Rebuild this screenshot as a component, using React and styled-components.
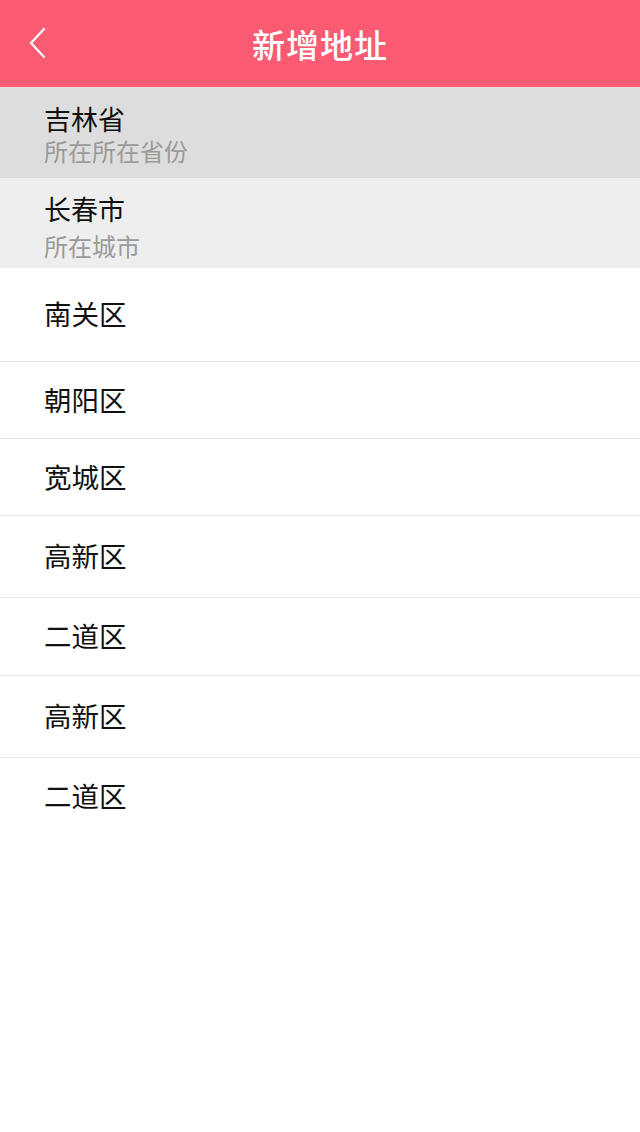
import React from "react";
import styled, { createGlobalStyle } from "styled-components";

const districts = [
    { name: "南关区", height: 93 },
    { name: "朝阳区", height: 77 },
    { name: "宽城区", height: 77 },
    { name: "高新区", height: 82 },
    { name: "二道区", height: 78 },
    { name: "高新区", height: 82 },
    { name: "二道区", height: 78 },
];

function App() {
    return (
        <>
            <GlobalStyle />
            <Page>
                <Header>
                    <BackButton aria-label="返回">
                        <svg width="20" height="32" viewBox="0 0 20 32">
                            <polyline
                                points="16,2 3,16 16,30"
                                fill="none"
                                stroke="#ffffff"
                                strokeWidth="2.2"
                                strokeLinecap="round"
                                strokeLinejoin="miter"
                            />
                        </svg>
                    </BackButton>
                    <Title>新增地址</Title>
                </Header>

                <Selected $bg="#dddddd">
                    <MainText>吉林省</MainText>
                    <SubText $gap={5}>所在所在省份</SubText>
                </Selected>
                <Selected $bg="#eeeeee">
                    <MainText>长春市</MainText>
                    <SubText $gap={10}>所在城市</SubText>
                </Selected>

                <List>
                    {districts.map((item, index) => (
                        <Item key={index} $height={item.height} $first={index === 0}>
                            {item.name}
                        </Item>
                    ))}
                </List>
            </Page>
        </>
    );
}

export default App;

const GlobalStyle = createGlobalStyle`
    html, body {
        margin: 0;
        padding: 0;
        background: #ffffff;
    }
    body {
        font-family: "Noto Sans CJK SC", "Noto Sans", sans-serif;
    }
`;

const Page = styled.div`
    width: 640px;
    min-height: 1132px;
    background: #ffffff;
    display: flex;
    flex-direction: column;
`;

const Header = styled.div`
    position: relative;
    height: 87px;
    background: #fb5b72;
    border-bottom: 1px solid #e9dcdd;
    display: flex;
    align-items: center;
    justify-content: center;
`;

const BackButton = styled.div`
    position: absolute;
    left: 28px;
    top: 27px;
    width: 20px;
    height: 32px;
    display: flex;
`;

const Title = styled.h1`
    margin: 0;
    color: #ffffff;
    font-size: 33px;
    font-weight: 500;
    letter-spacing: 1px;
    line-height: 1;
    padding-top: 1px;
`;

const Selected = styled.div`
    height: 90px;
    background: ${(p) => p.$bg};
    padding: 17px 0 0 44px;
    box-sizing: border-box;
    display: flex;
    flex-direction: column;
`;

const MainText = styled.div`
    font-size: 27px;
    color: #111111;
    line-height: 28px;
`;

const SubText = styled.div`
    margin-top: ${(p) => p.$gap}px;
    font-size: 24px;
    color: #9a9a9a;
    line-height: 26px;
`;

const List = styled.div`
    display: flex;
    flex-direction: column;
`;

const Item = styled.div`
    height: ${(p) => p.$height}px;
    box-sizing: border-box;
    border-top: ${(p) => (p.$first ? "none" : "1px solid #e6e6e6")};
    padding: 0 0 3px 44px;
    display: flex;
    align-items: center;
    font-size: 27.5px;
    color: #111111;
`;
